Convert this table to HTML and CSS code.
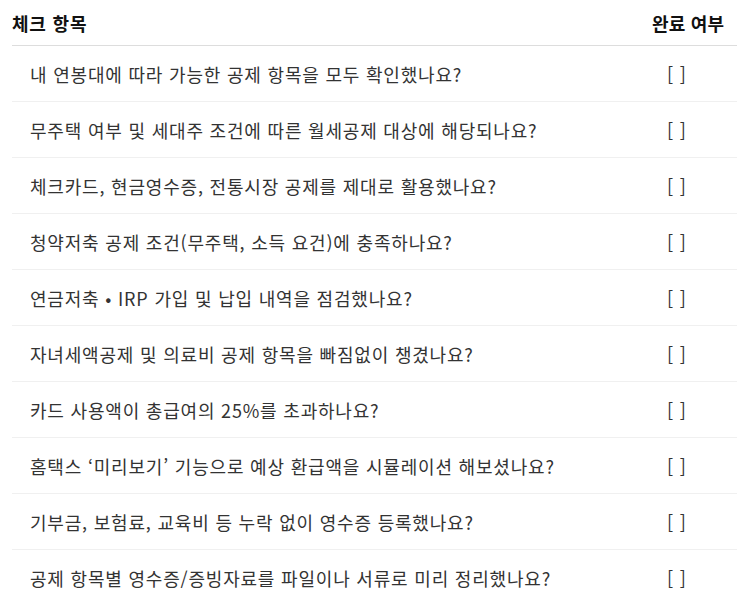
FILE: index.html
```html
<!DOCTYPE html>
<html lang="ko">
<head>
<meta charset="utf-8">
<link rel="stylesheet" href="styles.css">
</head>
<body>
<table class="checklist">
  <thead>
    <tr><th class="item">체크 항목</th><th class="done">완료 여부</th></tr>
  </thead>
  <tbody>
    <tr><td class="item">내 연봉대에 따라 가능한 공제 항목을 모두 확인했나요?</td><td class="done">[ ]</td></tr>
    <tr><td class="item">무주택 여부 및 세대주 조건에 따른 월세공제 대상에 해당되나요?</td><td class="done">[ ]</td></tr>
    <tr><td class="item">체크카드, 현금영수증, 전통시장 공제를 제대로 활용했나요?</td><td class="done">[ ]</td></tr>
    <tr><td class="item">청약저축 공제 조건(무주택, 소득 요건)에 충족하나요?</td><td class="done">[ ]</td></tr>
    <tr><td class="item">연금저축 • IRP 가입 및 납입 내역을 점검했나요?</td><td class="done">[ ]</td></tr>
    <tr><td class="item">자녀세액공제 및 의료비 공제 항목을 빠짐없이 챙겼나요?</td><td class="done">[ ]</td></tr>
    <tr><td class="item">카드 사용액이 총급여의 25%를 초과하나요?</td><td class="done">[ ]</td></tr>
    <tr><td class="item">홈택스 ‘미리보기’ 기능으로 예상 환급액을 시뮬레이션 해보셨나요?</td><td class="done">[ ]</td></tr>
    <tr><td class="item">기부금, 보험료, 교육비 등 누락 없이 영수증 등록했나요?</td><td class="done">[ ]</td></tr>
    <tr><td class="item">공제 항목별 영수증/증빙자료를 파일이나 서류로 미리 정리했나요?</td><td class="done">[ ]</td></tr>
  </tbody>
</table>
</body>
</html>
```
FILE: styles.css
```css
html, body { margin: 0; padding: 0; background: #fff; }
body {
  padding: 0 14px 0 12px;
  font-family: "Noto Sans CJK KR", "Noto Sans", sans-serif;
  color: #333;
}
.checklist {
  width: 100%;
  border-collapse: collapse;
  font-size: 18px;
  letter-spacing: 0.8px;
}
.checklist th {
  text-align: left;
  font-weight: 700;
  color: #111;
  height: 45px;
  padding: 0;
  border-bottom: 1px solid #ddd;
  vertical-align: middle;
}
.checklist th.done { width: 85px; letter-spacing: 0.2px; }
.checklist td {
  height: 55px;
  padding: 0;
  border-bottom: 1px solid #f0f0f0;
  vertical-align: middle;
}
.checklist td.item { padding-left: 18px; }
.checklist td.done { padding-left: 15px; }
```
